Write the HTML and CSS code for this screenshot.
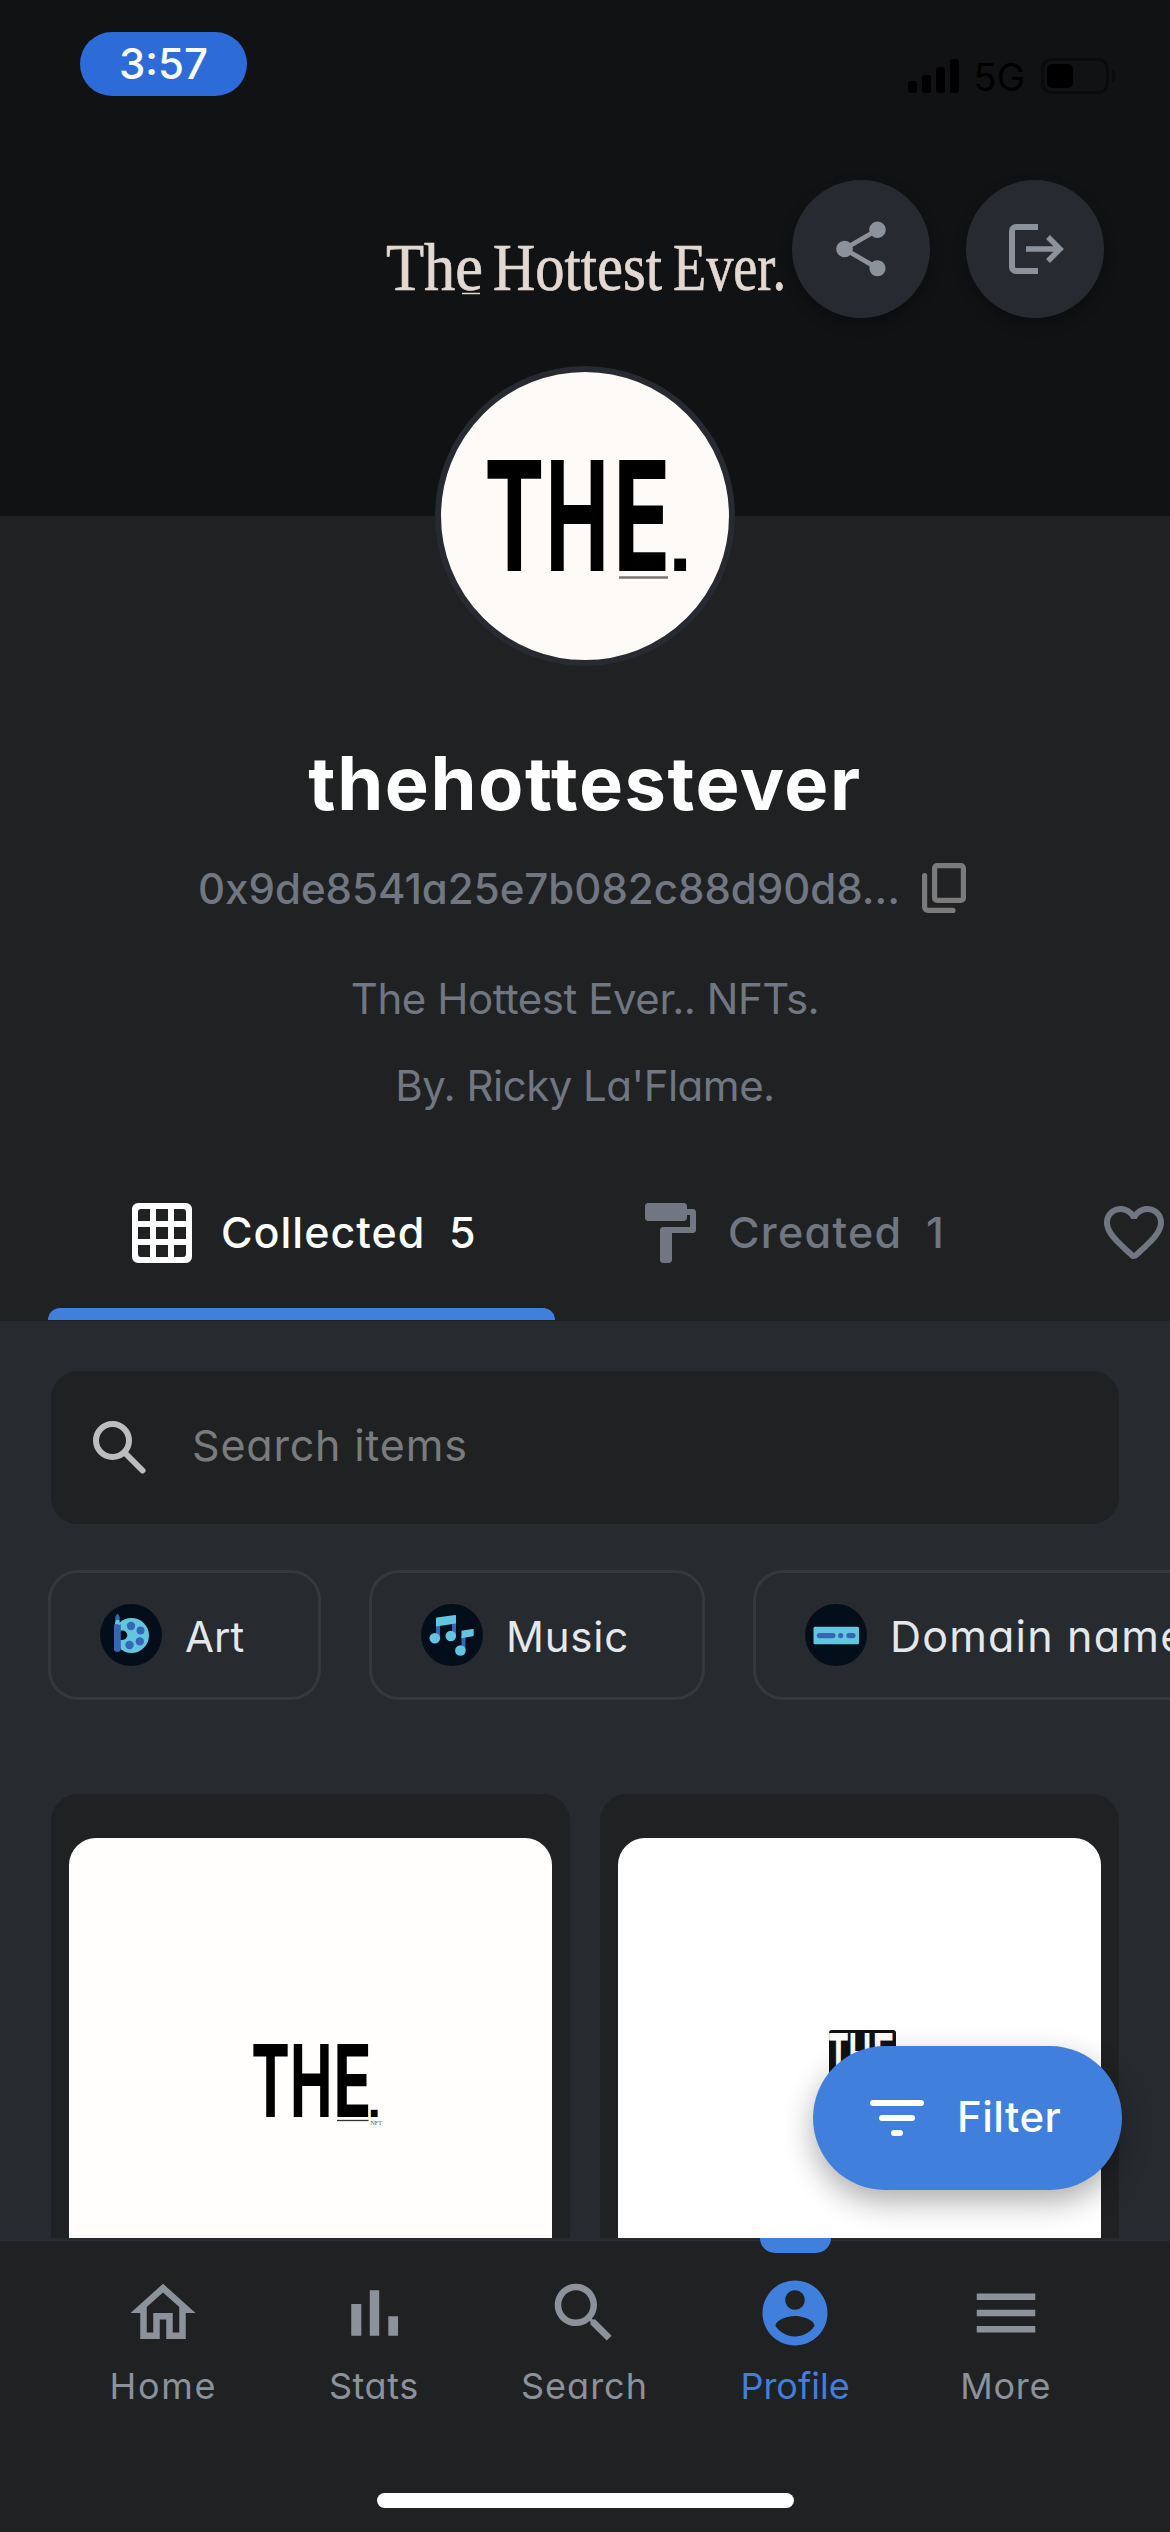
FILE: index.html
```html
<!DOCTYPE html>
<html lang="en">
<head>
<meta charset="utf-8">
<title>thehottestever</title>
<link rel="stylesheet" href="styles.css">
</head>
<body>
<div class="screen">
  <header class="banner">
    <div class="status">
      <span class="clock">3:57</span>
      <div class="signals">
        <svg class="bars" viewBox="0 0 51 34"><rect x="0" y="22" width="9" height="12" rx="2.5"/><rect x="14" y="16" width="9" height="18" rx="2.5"/><rect x="28" y="8" width="9" height="26" rx="2.5"/><rect x="42" y="0" width="9" height="34" rx="2.5"/></svg>
        <span class="network">5G</span>
        <svg class="battery" viewBox="0 0 76 36"><rect x="1.5" y="1.5" width="65" height="33" rx="9.5" fill="none" stroke="#0a0b0c" stroke-width="3"/><rect x="6" y="6" width="26" height="24" rx="5"/><path d="M71 12c5.300 2 5.300 10 0 12z" fill="#0a0b0c"/></svg>
      </div>
    </div>
    <svg class="wordmark" viewBox="0 0 400 60">
      <text x="0" y="50" textLength="97" lengthAdjust="spacingAndGlyphs">The</text>
      <text x="107" y="50" textLength="169" lengthAdjust="spacingAndGlyphs">Hottest</text>
      <text x="287" y="50" textLength="113" lengthAdjust="spacingAndGlyphs">Ever.</text>
      <path d="M76 53.500h18" stroke="#e3d9d2" stroke-width="1.500"/>
    </svg>
    <div class="actions">
      <button class="round"><svg viewBox="0 0 24 24"><path d="M18 16.080c-.76 0-1.440.3-1.960.77L8.910 12.700c.05-.23.09-.46.09-.7s-.04-.47-.09-.7l7.050-4.110c.54.5 1.250.81 2.040.81 1.660 0 3-1.340 3-3s-1.340-3-3-3-3 1.340-3 3c0 .24.040.47.090.7L8.040 9.810C7.500 9.310 6.790 9 6 9c-1.660 0-3 1.340-3 3s1.340 3 3 3c.79 0 1.500-.31 2.040-.81l7.120 4.160c-.05.21-.08.43-.08.650 0 1.610 1.310 2.920 2.920 2.920s2.920-1.310 2.920-2.920-1.310-2.920-2.920-2.920z"/></svg></button>
      <button class="round"><svg viewBox="0 0 66 66"><path d="M36 11H14a4 4 0 0 0-4 4v36a4 4 0 0 0 4 4h22" fill="none" stroke="#8b929b" stroke-width="6"/><path d="M24 33h34M46 21l12 12-12 12" fill="none" stroke="#8b929b" stroke-width="5.500"/></svg></button>
    </div>
    <svg class="avatar" viewBox="0 0 300 300">
      <circle cx="150" cy="150" r="147" fill="#fefaf7" stroke="#272a30" stroke-width="6"/>
      <g class="logo avatar-logo">
        <text transform="translate(49.300 205) scale(.590 1)">T</text>
        <text transform="translate(110.500 205) scale(.556 1)">H</text>
        <text transform="translate(178 205) scale(.620 1)">E</text>
        <text class="dot avatar-dot" x="233.500" y="205">.</text>
      </g>
      <path d="M184 211.500h49" stroke="#777" stroke-width="2.500"/>
    </svg>
  </header>

  <section class="profile">
    <h1>thehottestever</h1>
    <div class="address"><span>0x9de8541a25e7b082c88d90d8...</span>
      <svg class="outline" viewBox="0 0 44 50" stroke="#7b7b7b" stroke-width="5.200"><rect x="12.600" y="2.600" width="28.800" height="34.800" rx="2.500"/><path d="M2.600 12.500V44a3.400 3.400 0 0 0 3.400 3.400H31" stroke-linecap="round"/></svg>
    </div>
    <p class="bio">The Hottest Ever.. NFTs.</p>
    <p class="bio bio-by">By. Ricky La'Flame.</p>
    <nav class="tabs">
      <a class="tab active"><svg viewBox="0 0 24 24"><path fill-rule="evenodd" d="M4 2h16a2 2 0 0 1 2 2v16a2 2 0 0 1-2 2H4a2 2 0 0 1-2-2V4a2 2 0 0 1 2-2zm1 2a1 1 0 0 0-1 1v3h4V4zm5 0v4h4V4zm6 0v4h4V5a1 1 0 0 0-1-1zM4 10v4h4v-4zm6 0v4h4v-4zm6 0v4h4v-4zM4 16v3a1 1 0 0 0 1 1h3v-4zm6 0v4h4v-4zm6 0v4h3a1 1 0 0 0 1-1v-3z"/></svg><span class="collected">Collected</span><span class="count">5</span></a>
      <a class="tab"><svg viewBox="0 0 24 24"><path d="M18 4V3c0-.55-.45-1-1-1H5c-.55 0-1 .45-1 1v4c0 .55.45 1 1 1h12c.55 0 1-.45 1-1V6h1v4h-9c-.55 0-1 .45-1 1v10c0 .55.45 1 1 1h2c.55 0 1-.45 1-1v-9h7c.55 0 1-.45 1-1V5c0-.55-.45-1-1-1z"/></svg><span class="created">Created</span><span class="count">1</span></a>
      <a class="tab"><svg viewBox="0 0 24 24"><path d="M19.660 3.990c-2.640-1.800-5.900-.96-7.660 1.100-1.760-2.060-5.020-2.910-7.660-1.100-1.400.96-2.280 2.580-2.340 4.290-.14 3.880 3.300 6.990 8.550 11.760l.1.090c.76.690 1.930.690 2.690-.010l.11-.1c5.250-4.760 8.680-7.870 8.550-11.750-.06-1.700-.94-3.320-2.340-4.280zM12.100 18.550l-.1.100-.1-.1C7.140 14.240 4 11.390 4 8.500 4 6.500 5.500 5 7.500 5c1.540 0 3.040.99 3.570 2.360h1.870C13.460 5.990 14.960 5 16.500 5c2 0 3.500 1.500 3.500 3.500 0 2.890-3.140 5.740-7.900 10.050z"/></svg></a>
    </nav>
  </section>

  <main class="content">
    <label class="search"><svg class="outline" viewBox="0 0 24 24" stroke="#bdbdbd" stroke-width="2"><circle cx="9.500" cy="9.500" r="5.500"/><path d="M14 14l5.500 5.500" stroke-linecap="round"/></svg><span>Search items</span></label>

    <div class="chips">
      <div class="chip chip-art"><svg viewBox="0 0 62 62"><circle cx="31" cy="31" r="31" fill="#040e1a"/><circle cx="31.500" cy="31.500" r="17.500" fill="#62c6e0"/><path d="M18 26.500h4.500a4.700 4.700 0 0 1 0 9.500H18z" fill="#040e1a"/><g fill="#3567b5"><circle cx="31" cy="22" r="4.200"/><circle cx="40.500" cy="26.500" r="4"/><circle cx="39.800" cy="37.400" r="4.200"/><circle cx="29.500" cy="41" r="4.200"/><path d="M14 20.500h6.800V45q0 3-3.400 3T14 45zM17.500 9.500c2.500 3 3 5 1.700 7h-3.400c-1.300-2-.8-4 1.700-7z"/></g><path d="M15.500 16h4l.6 4.500h-5.200z" fill="#62c6e0"/></svg><span>Art</span></div>
      <div class="chip chip-music"><svg viewBox="0 0 62 62"><circle cx="31" cy="31" r="31" fill="#040e1a"/><path d="M15 20h4v14h-4zM31 18h4v14h-4zM40.500 32h4v14h-4z" fill="#3567b5"/><g fill="#62c6e0"><path d="M15 14.500q0-1 1-1.100L34 11q1-.1 1 1v7.500L15 22.500zM40.500 27.500q0-1 1-1.100l10-1.400q1.200-.1 1.200 1v5q0 1-1 1.200l-11.200 2z"/><circle cx="13.800" cy="34.200" r="5.300"/><circle cx="29.800" cy="32" r="5.300"/><circle cx="39.400" cy="46.500" r="5.300"/></g></svg><span>Music</span></div>
      <div class="chip chip-domain"><svg viewBox="0 0 62 62"><circle cx="31" cy="31" r="31" fill="#040e1a"/><rect x="8.500" y="22.700" width="45.500" height="17.500" rx="1.500" fill="#62c6e0"/><g fill="#3567b5"><rect x="11.800" y="29" width="18.700" height="5.200" rx="2.600"/><circle cx="35.700" cy="31.600" r="2.600"/><rect x="41.300" y="29" width="9.300" height="5.200" rx="2.600"/></g></svg><span>Domain names</span></div>
    </div>

    <div class="cards">
      <article class="card"><svg class="art art-cream" viewBox="0 0 483 483">
        <g class="logo card-logo">
          <text transform="translate(182.300 279) scale(.575 1)">T</text>
          <text transform="translate(221 279) scale(.565 1)">H</text>
          <text transform="translate(264.300 279) scale(.628 1)">E</text>
          <text class="dot card-dot" x="298.600" y="279">.</text>
        </g>
        <path d="M268 282.500h31.500" stroke="#333" stroke-width="1.300"/>
        <text class="nft" x="301.500" y="287">NFT</text>
      </svg></article>
      <article class="card"><svg class="art art-white" viewBox="0 0 483 483">
        <rect x="211" y="192" width="67" height="52" rx="3" fill="#111"/>
        <g class="logo small-logo">
          <text transform="translate(210 239) scale(.52 1)">T</text>
          <text transform="translate(230.400 239) scale(.51 1)">H</text>
          <text transform="translate(254.500 239) scale(.6 1)">E</text>
        </g>
      </svg></article>
    </div>
    <button class="filter"><svg viewBox="0 0 54 36"><rect width="54" height="6" rx="3"/><rect x="9" y="15" width="36" height="6" rx="3"/><rect x="21" y="30" width="12" height="6" rx="3"/></svg><span>Filter</span></button>
  </main>

  <footer class="bottom">
    <nav class="menu">
      <a class="item home"><svg viewBox="0 0 24 24"><path d="M12 5.690l5 4.500V18h-2v-6H9v6H7v-7.810l5-4.500M12 3L2 12h3v8h6v-6h2v6h6v-8h3L12 3z"/></svg><span>Home</span></a>
      <a class="item stats"><svg viewBox="0 0 24 24"><path d="M5 9.200h3.100V19H5zM10.700 5h2.900v14h-2.900zM16.400 13h3v6h-3z"/></svg><span>Stats</span></a>
      <a class="item find"><svg viewBox="0 0 24 24"><path d="M15.500 14h-.79l-.28-.27C15.410 12.590 16 11.110 16 9.500 16 5.910 13.090 3 9.500 3S3 5.910 3 9.500 5.910 16 9.500 16c1.610 0 3.090-.59 4.230-1.570l.27.280v.79l5 4.990L20.490 19l-4.990-5zm-6 0C7.010 14 5 11.990 5 9.500S7.010 5 9.500 5 14 7.010 14 9.500 11.990 14 9.500 14z"/></svg><span>Search</span></a>
      <a class="item me"><svg viewBox="0 0 24 24"><path d="M12 2C6.480 2 2 6.480 2 12s4.480 10 10 10 10-4.480 10-10S17.520 2 12 2zm0 3c1.660 0 3 1.340 3 3s-1.340 3-3 3-3-1.340-3-3 1.340-3 3-3zm0 14.200c-2.500 0-4.710-1.280-6-3.220.03-1.990 4-3.080 6-3.080 1.990 0 5.970 1.090 6 3.080-1.290 1.940-3.500 3.220-6 3.220z"/></svg><span>Profile</span></a>
      <a class="item more"><svg viewBox="0 0 24 24"><path d="M3 18h18v-2H3v2zm0-5h18v-2H3v2zm0-7v2h18V6H3z"/></svg><span>More</span></a>
    </nav>
    <div class="handle"></div>
  </footer>
</div>
</body>
</html>
```
FILE: styles.css
```css
* { box-sizing: border-box; margin: 0; padding: 0; }

body {
  background: #202122;
  font-family: Inter, "Open Sans", sans-serif;
  font-feature-settings: "cv11";
}

svg { display: block; flex: none; fill: currentColor; }
svg.outline { fill: none; }
button { border: 0; font: inherit; color: inherit; }
span { white-space: nowrap; }

.screen {
  width: 1170px;
  height: 2532px;
  overflow: hidden;
  display: flex;
  flex-direction: column;
  background: #202122;
}

/* Banner with status bar, wordmark and actions */
.banner { position: relative; flex: none; height: 516px; background: #111214; }

.status {
  display: flex;
  justify-content: space-between;
  align-items: flex-start;
  padding: 32px 54px 0 80px;
}
.clock {
  width: 167px;
  height: 64px;
  border-radius: 32px;
  background: #2d6bd8;
  color: #fff;
  font-size: 42px;
  font-weight: 500;
  line-height: 64px;
  text-align: center;
}
.signals { display: flex; align-items: center; margin-top: 24px; color: #000; }
.bars { width: 51px; height: 34px; }
.network { margin: 0 16px 0 15px; padding-top: 3px; font-size: 38px; line-height: 36px; }
.battery { width: 76px; height: 36px; margin-right: -1px; }

.wordmark {
  position: absolute;
  left: 386px;
  top: 240px;
  width: 400px;
  height: 60px;
  overflow: visible;
  fill: #e3d9d2;
  stroke: #e3d9d2;
  stroke-width: .7px;
  font-family: "Liberation Serif", serif;
  font-size: 68px;
}
.actions { position: absolute; left: 792px; top: 180px; display: flex; gap: 36px; }
.round {
  display: grid;
  place-items: center;
  width: 138px;
  height: 138px;
  border-radius: 50%;
  background: #272a30;
  color: #8b929b;
  box-shadow: 0 6px 14px rgba(0, 0, 0, .3);
}
.round svg { width: 66px; height: 66px; }

.avatar { position: absolute; left: 435px; top: 366px; width: 300px; height: 300px; }
.logo { fill: #000; font-weight: 700; }
.avatar-logo { font-size: 152.700px; }
.dot { font-family: "Liberation Sans", sans-serif; }
.avatar-dot { font-size: 84px; }

/* Profile summary */
.profile {
  flex: none;
  height: 805px;
  padding-top: 226px;
  display: flex;
  flex-direction: column;
  align-items: center;
  color: #707782;
  font-size: 42px;
}
h1 { color: #fff; font-size: 74px; line-height: 83px; letter-spacing: 1.550px; font-weight: 700; }
.address {
  display: flex;
  align-items: center;
  gap: 22px;
  height: 60px;
  margin: 33px 6px 37px 0;
  font-weight: 500;
  letter-spacing: 0;
}
.address svg { width: 44px; height: 50px; }
.bio { line-height: 87px; letter-spacing: -.45px; }
.bio-by { letter-spacing: -.5px; }

.tabs { align-self: stretch; display: flex; margin-top: 17px; padding-left: 48px; overflow: hidden; }
.tab {
  position: relative;
  flex: none;
  display: flex;
  align-items: center;
  width: 507px;
  height: 174px;
  padding-left: 78px;
  font-size: 43px;
  font-weight: 500;
}
.tab + .tab { width: 465px; }
.tab svg { width: 72px; height: 72px; margin-right: 23px; }
.tab span { padding-bottom: 3px; }
.active { color: #fff; }
.active::after {
  content: "";
  position: absolute;
  left: 0;
  right: 0;
  bottom: 0;
  height: 12px;
  border-radius: 12px 12px 0 0;
  background: #407fdb;
}
.collected { width: 228px; letter-spacing: 1px; }
.created { width: 198px; letter-spacing: 1.300px; }

/* Collection */
.content {
  position: relative;
  flex: none;
  height: 917px;
  padding: 50px 51px 0;
  overflow: hidden;
  background: #272a2f;
}
.search {
  display: flex;
  align-items: center;
  height: 153px;
  padding-left: 33px;
  border-radius: 27px;
  background: #202122;
  color: #7a7b7d;
  font-size: 43px;
  letter-spacing: .8px;
}
.search svg { width: 72px; height: 72px; margin-right: 36px; }
.search span { padding-bottom: 6px; }

.chips { display: flex; gap: 48px; margin: 46px -51px 0 -3px; }
.chip {
  flex: none;
  display: flex;
  align-items: center;
  height: 130px;
  padding-left: 49px;
  border: 3px solid #35383d;
  border-radius: 30px;
  color: #e5e8eb;
  font-size: 42px;
}
.chip svg { width: 62px; height: 62px; margin-right: 23px; }
.chip span { padding-top: 2px; }
.chip-art { width: 273px; }
.chip-music { width: 336px; letter-spacing: .8px; }
.chip-domain { width: 520px; font-size: 43px; letter-spacing: 1.200px; }

.cards { display: flex; gap: 30px; margin-top: 94px; }
.card { flex: none; width: 519px; height: 620px; padding: 44px 18px; border-radius: 27px; background: #202122; }
.art { width: 483px; height: 483px; border-radius: 27px; }
.art-cream { background: #fffefc; }
.art-white { background: #fff; }
.card-logo { font-size: 100.400px; }
.card-dot { font-size: 48px; }
.nft { fill: #555; font-family: "Liberation Serif", serif; font-size: 6px; }
.small-logo { fill: #fff; font-size: 60px; }

.filter {
  position: absolute;
  left: 813px;
  top: 725px;
  display: flex;
  align-items: center;
  gap: 33px;
  width: 309px;
  height: 144px;
  padding-left: 57px;
  border-radius: 72px;
  background: #407fdb;
  box-shadow: 0 12px 30px rgba(0, 0, 0, .32);
  color: #fff;
  font-size: 42px;
  font-weight: 500;
  letter-spacing: .5px;
}
.filter svg { width: 54px; height: 36px; }
.filter span { padding-bottom: 3px; }

/* Bottom navigation */
.bottom { flex: none; height: 294px; border-top: 3px solid #272a30; background: #202122; }
.menu { display: grid; grid-template-columns: repeat(5, 210.600px); padding-left: 58px; margin-top: -3px; height: 255px; }
.item {
  display: flex;
  flex-direction: column;
  align-items: center;
  padding-top: 36px;
  color: #8b929b;
  font-size: 36px;
  line-height: 44px;
}
.item svg { width: 78px; height: 78px; margin-bottom: 12px; }
.home { letter-spacing: 1.700px; }
.stats { letter-spacing: .6px; }
.find { letter-spacing: 1px; }
.more { letter-spacing: .7px; }
.me { color: #407fdb; }
.me::before {
  content: "";
  width: 71px;
  height: 15px;
  margin: -36px 0 21px;
  border-radius: 0 0 15px 15px;
  background: #407fdb;
}
.handle { width: 417px; height: 15px; margin: 0 auto; border-radius: 8px; background: #fff; }
```
